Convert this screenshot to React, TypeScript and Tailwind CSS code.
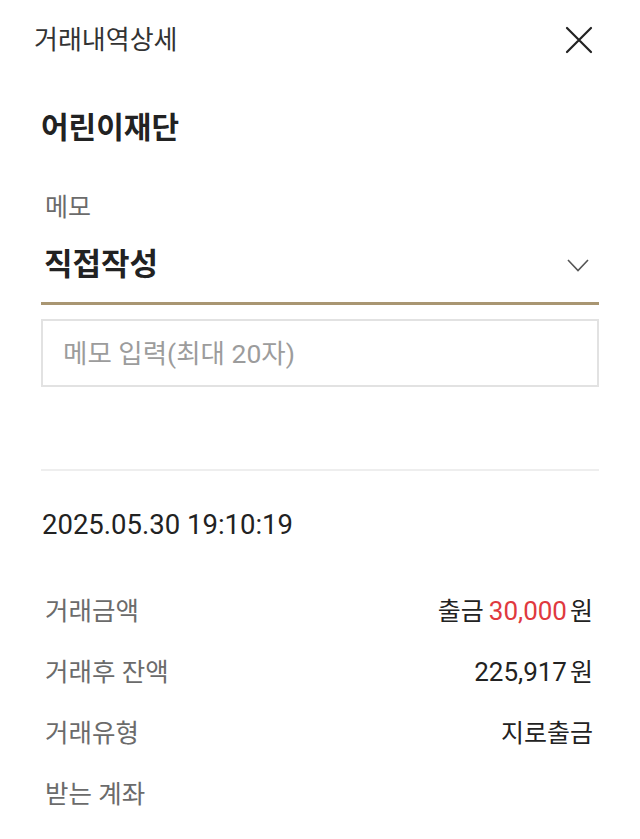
const rows = [
  { label: "거래금액", kind: "amount" },
  { label: "거래후 잔액", kind: "balance" },
  { label: "거래유형", kind: "type" },
  { label: "받는 계좌", kind: "account" },
];

function RowValue({ kind }: { kind: string }) {
  if (kind === "amount") {
    return (
      <span className="flex items-baseline text-[#222]">
        <span className="text-[25px] mr-[5px]">출금</span>
        <span className="text-[26px] text-[#e0393e]">30,000</span>
        <span className="text-[25px] ml-[3px]">원</span>
      </span>
    );
  }
  if (kind === "balance") {
    return (
      <span className="flex items-baseline text-[#222]">
        <span className="text-[26px]">225,917</span>
        <span className="text-[25px] ml-[3px]">원</span>
      </span>
    );
  }
  if (kind === "type") {
    return <span className="text-[25px] text-[#222]">지로출금</span>;
  }
  return null;
}

export default function App() {
  return (
    <div className="w-[640px] min-h-[839px] bg-white font-['Roboto','Noto_Sans_CJK_KR',sans-serif]">
      <div className="flex items-center justify-between h-[80px] pl-[34px] pr-[47px]">
        <h1 className="text-[26px] text-[#333] leading-none">거래내역상세</h1>
        <svg width="28" height="28" viewBox="0 0 28 28" fill="none">
          <path d="M2 2 L26 26 M26 2 L2 26" stroke="#222" strokeWidth="2.2" strokeLinecap="round" />
        </svg>
      </div>

      <div className="px-[41px]">
        <h2 className="mt-[28px] text-[30px] font-bold leading-[40px] text-[#222]">어린이재단</h2>

        <div className="mt-[44px] pl-[4px] text-[25px] leading-[32px] text-[#6b6b6b]">메모</div>

        <div className="mt-[17px] flex items-center justify-between h-[48px] pl-[3px] pr-[10px]">
          <span className="text-[31px] font-bold text-[#222]">직접작성</span>
          <svg width="22" height="13" viewBox="0 0 22 13" fill="none">
            <path d="M1 1 L11 11.5 L21 1" stroke="#555" strokeWidth="1.6" />
          </svg>
        </div>
        <div className="mt-[13px] h-[3px] bg-[#a99672]" />

        <div className="mt-[14px] h-[68px] border-2 border-[#e2e2e2] flex items-center">
          <input
            className="w-full h-full pl-[20px] text-[26.5px] text-[#222] outline-none placeholder:text-[#9c9c9c] bg-transparent"
            placeholder="메모 입력(최대 20자)"
          />
        </div>

        <div className="mt-[82px] h-[2px] bg-[#eeeeee]" />

        <div className="mt-[34px] pl-[1px] text-[27.5px] leading-[40px] text-[#222]">2025.05.30 19:10:19</div>

        <div className="mt-[36px]">
          {rows.map((row) => (
            <div key={row.label} className="flex items-center justify-between h-[61px] pl-[4px] pr-[6px]">
              <span className="text-[25.5px] text-[#6b6b6b]">{row.label}</span>
              <RowValue kind={row.kind} />
            </div>
          ))}
        </div>
      </div>
    </div>
  );
}
